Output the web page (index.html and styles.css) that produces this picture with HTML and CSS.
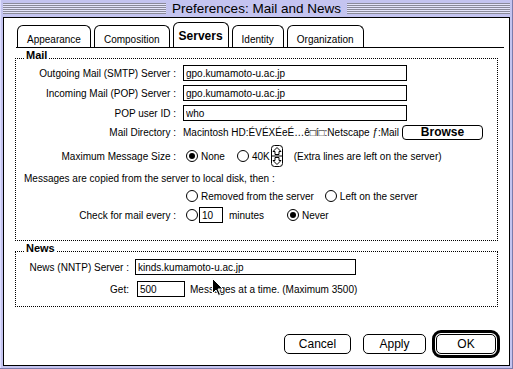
FILE: index.html
```html
<!DOCTYPE html>
<html lang="en">
<head>
    <meta charset="UTF-8">
    <meta name="viewport" content="width=device-width, initial-scale=1.0">
    <title>Preferences: Mail and News</title>
    <link rel="stylesheet" href="styles.css">
</head>
<body>
    <div class="window">
        <div class="titlebar">
            <div class="stripes"></div>
            <div class="title">Preferences: Mail and News</div>
            <div class="stripes"></div>
        </div>

        <div class="content">
            <div class="tabs">
                <div class="tab">Appearance</div>
                <div class="tab">Composition</div>
                <div class="tab active">Servers</div>
                <div class="tab">Identity</div>
                <div class="tab">Organization</div>
            </div>

            <div class="group mail">
                <div class="legend">Mail</div>
                <div class="form mail-form">
                    <div class="label">Outgoing Mail (SMTP) Server :</div>
                    <div class="value"><input class="field wide" type="text" value="gpo.kumamoto-u.ac.jp"></div>

                    <div class="label">Incoming Mail (POP) Server :</div>
                    <div class="value"><input class="field wide" type="text" value="gpo.kumamoto-u.ac.jp"></div>

                    <div class="label">POP user ID :</div>
                    <div class="value"><input class="field wide" type="text" value="who"></div>

                    <div class="label">Mail Directory :</div>
                    <div class="value">
                        <span>Macintosh HD:ÉVÉXÉeÉ…ê□í□:Netscape ƒ:Mail</span>
                        <button class="btn browse">Browse</button>
                    </div>

                    <div class="label">Maximum Message Size :</div>
                    <div class="value">
                        <span class="radio on"></span><span class="opt">None</span>
                        <span class="radio gap-none"></span><span class="opt">40K</span>
                        <svg class="spinner" width="12" height="22" viewBox="0 0 12 22">
                            <rect x="0.5" y="0.5" width="11" height="21" rx="3" fill="#fff" stroke="#000"/>
                            <line x1="0.5" y1="11" x2="11.5" y2="11" stroke="#000"/>
                            <polygon points="6,2.5 10,6.5 8,6.5 8,9.5 4,9.5 4,6.5 2,6.5" fill="none" stroke="#000"/>
                            <polygon points="6,19.5 10,15.5 8,15.5 8,12.5 4,12.5 4,15.5 2,15.5" fill="none" stroke="#000"/>
                        </svg>
                        <span class="extra">(Extra lines are left on the server)</span>
                    </div>

                    <div class="note">Messages are copied from the server to local disk, then :</div>

                    <div class="value col2">
                        <span class="radio"></span><span class="opt">Removed from the server</span>
                        <span class="radio gap-left"></span><span class="opt">Left on the server</span>
                    </div>

                    <div class="label">Check for mail every :</div>
                    <div class="value">
                        <span class="radio"></span>
                        <input class="field mins" type="text" value="10">
                        <span class="minutes">minutes</span>
                        <span class="radio gap-never on"></span><span class="opt">Never</span>
                    </div>
                </div>
            </div>

            <div class="group news">
                <div class="legend">News</div>
                <div class="form news-form">
                    <div class="label">News (NNTP) Server :</div>
                    <div class="value"><input class="field server" type="text" value="kinds.kumamoto-u.ac.jp"></div>

                    <div class="label">Get:</div>
                    <div class="value">
                        <input class="field count" type="text" value="500">
                        <span class="per">Messages at a time. (Maximum 3500)</span>
                    </div>
                </div>
            </div>

            <div class="actions">
                <button class="btn push">Cancel</button>
                <button class="btn push apply">Apply</button>
                <div class="default-ring"><button class="btn push ok">OK</button></div>
            </div>
        </div>

        <svg class="cursor" width="12" height="19" viewBox="0 0 12 19">
            <path d="M0.5,0.5 L0.5,15.5 L4,12 L6.5,17.5 L8.5,16.5 L6,11 L11,11 Z" fill="#000" stroke="#fff"/>
        </svg>
    </div>
</body>
</html>
```

FILE: styles.css
```css
body {
    margin: 0;
    background: #c4c4f0;
    font-family: "Liberation Sans", Arial, sans-serif;
    font-size: 10px;
    color: #000;
}

.window {
    position: relative;
    width: 513px;
    height: 369px;
    box-sizing: border-box;
    padding: 0 3px 3px;
    background: #c4c4f0;
    box-shadow: inset -1px -1px 0 #7c7cac, inset 1px 0 0 #dedeff;
}

/* title bar */
.titlebar {
    height: 17px;
    display: flex;
    align-items: center;
    gap: 6px;
}

.stripes {
    flex: 1;
    height: 11px;
    background: repeating-linear-gradient(to bottom, #8a8a9a 0 1px, #e4e4fa 1px 2px);
}

.title {
    font-size: 13.5px;
    line-height: 17px;
}

.content {
    height: 349px;
    box-sizing: border-box;
    border: 1px solid #000;
    background: #fff;
}

/* tabs */
.tabs {
    display: flex;
    align-items: flex-end;
    gap: 3px;
    margin: 4px 5px 0 12px;
    padding-left: 1px;
    border-bottom: 1px solid #000;
}

.tab {
    border: 1px solid #000;
    border-bottom: 0;
    border-radius: 6px 6px 0 0;
    padding: 8px 9px 1px;
    line-height: 12px;
}

.tab.active {
    font-size: 12px;
    font-weight: bold;
    line-height: 14px;
    padding: 6px 5px 4px;
}

/* groups */
.group {
    margin: 10px 11px 0;
    border: 1px dotted #000;
}

.mail {
    padding-bottom: 17px;
}

.news {
    padding-bottom: 6px;
}

.legend {
    width: fit-content;
    margin: -9px 0 3px 9px;
    padding: 0 1px;
    background: #fff;
    font-size: 11px;
    font-weight: bold;
    line-height: 10px;
}

.form {
    display: grid;
    align-items: center;
}

.mail-form {
    grid-template-columns: 160px 1fr;
    grid-template-rows: 20px 20px 20px 18px 30px 14px 22px 16px;
    column-gap: 7px;
}

.news-form {
    grid-template-columns: 113px 1fr;
    grid-template-rows: 22px 22px;
    column-gap: 6px;
}

.label {
    text-align: right;
    white-space: nowrap;
}

.value {
    display: flex;
    align-items: center;
    white-space: nowrap;
}

.col2 {
    grid-column: 2;
}

.note {
    grid-column: 1 / -1;
    padding-left: 8px;
}

.field {
    height: 16px;
    box-sizing: border-box;
    border: 1px solid #000;
    border-radius: 0;
    padding: 0 2px;
    margin: 0;
    font: inherit;
    color: #000;
    background: #fff;
    outline: none;
}

.wide { width: 224px; }
.server { width: 221px; }
.count { width: 48px; margin-left: 2px; }
.mins { width: 24px; margin-left: 1px; }

.minutes { margin-left: 6px; }
.per { margin-left: 5px; }

/* radios */
.radio {
    width: 12px;
    height: 12px;
    box-sizing: border-box;
    border: 1px solid #000;
    border-radius: 50%;
    display: inline-flex;
    align-items: center;
    justify-content: center;
    flex: none;
    margin-left: 3px;
}

.radio.on::after {
    content: "";
    width: 6px;
    height: 6px;
    border-radius: 50%;
    background: #000;
}

.opt { margin-left: 3px; }

.gap-none { margin-left: 12px; }
.gap-left { margin-left: 11px; }
.gap-never { margin-left: 23px; }

.spinner {
    margin-left: 1px;
    flex: none;
}

.extra { margin-left: 11px; }

/* buttons */
.btn {
    border: 1px solid #000;
    border-radius: 5px;
    background: #fff;
    color: #000;
    font-family: "Liberation Sans", Arial, sans-serif;
    padding: 0;
    margin: 0;
}

.browse {
    width: 81px;
    height: 15px;
    margin: 0 14px 0 auto;
    font-size: 12px;
    font-weight: bold;
    line-height: 13px;
    border-radius: 4px;
}

.actions {
    display: flex;
    justify-content: flex-end;
    align-items: center;
    margin: 23px 9px 0 0;
}

.push {
    width: 67px;
    height: 20px;
    font-size: 12px;
}

.apply {
    width: 63px;
    margin: 0 6px 0 12px;
}

.default-ring {
    border: 3px solid #000;
    border-radius: 9px;
    padding: 1px;
    display: flex;
}

.ok {
    width: 60px;
}

.cursor {
    position: absolute;
    left: 212px;
    top: 278px;
}
```
